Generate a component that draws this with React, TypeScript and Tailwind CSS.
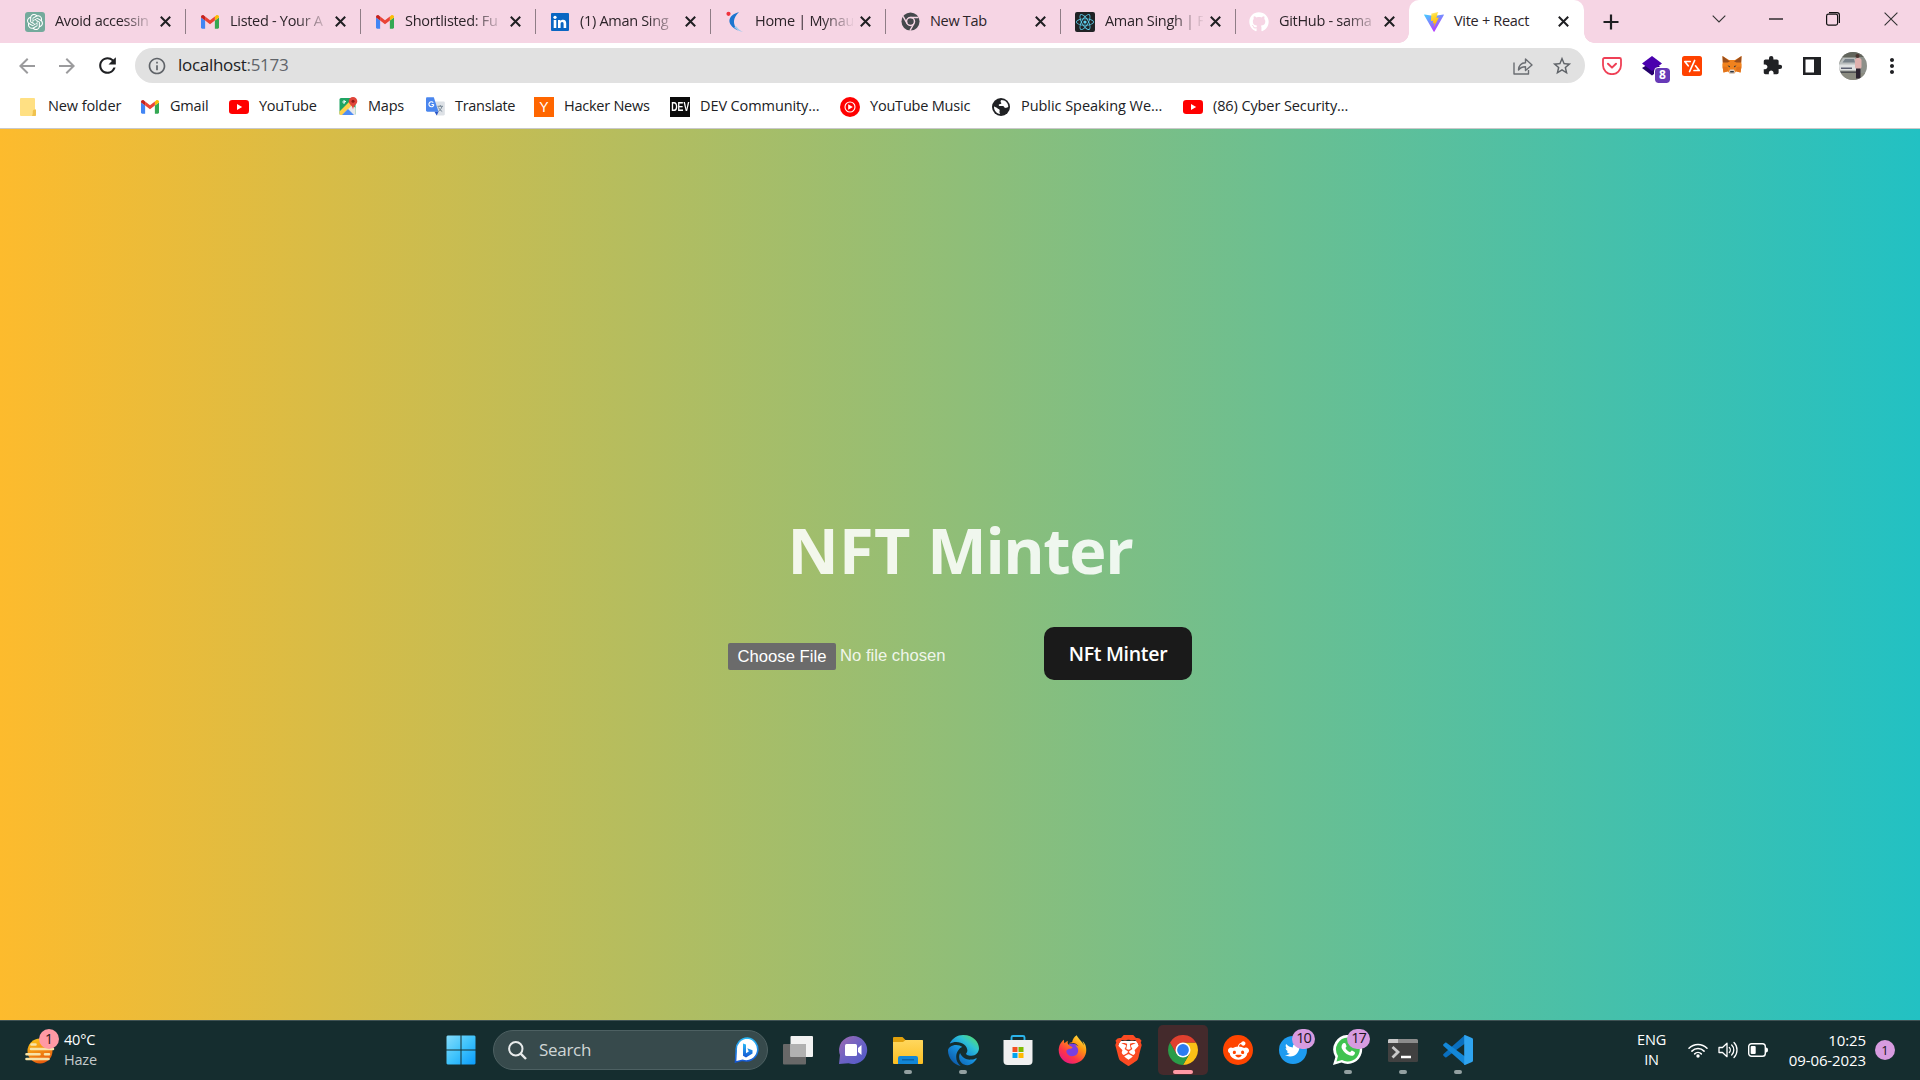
import React from "react";
import {
  MdArrowBack,
  MdArrowForward,
  MdRefresh,
  MdInfoOutline,
  MdStarBorder,
  MdExtension,
  MdMoreVert,
} from "react-icons/md";
import {
  FaGithub,
  FaReact,
  FaFirefoxBrowser,
  FaRedditAlien,
  FaTwitter,
  FaBrave,
  FaEdge,
} from "react-icons/fa6";
import { SiOpenai } from "react-icons/si";

const ui = "font-['Open_Sans','Noto_Sans',sans-serif]";

/* ---------- logos ---------- */

const Gmail = () => (
  <svg viewBox="0 0 24 18" className="h-[14px] w-[18px]">
    <path d="M0 16.4V3l5.500 4.100V18H1.600C.7 18 0 17.300 0 16.400z" fill="#4285f4" />
    <path d="M18.500 18V7.100L24 3v13.400c0 .9-.7 1.600-1.600 1.600z" fill="#34a853" />
    <path d="M18.500 1.600v5.500L24 3V2.200C24 .2 21.700-.9 20.100.3z" fill="#fbbc04" />
    <path d="M5.500 7.100V1.600L12 6.500l6.500-4.900v5.500L12 12z" fill="#ea4335" />
    <path d="M0 2.200V3l5.500 4.100V1.600L3.900.3C2.300-.9 0 .2 0 2.200z" fill="#c5221f" />
  </svg>
);

const OpenAi = () => (
  <div className="flex h-5 w-5 items-center justify-center rounded-[3px] bg-[#74aa9c] text-white">
    <SiOpenai size={16} />
  </div>
);

const LinkedIn = () => (
  <svg viewBox="0 0 18 18" className="h-[18px] w-[18px]">
    <rect width="18" height="18" rx="1" fill="#0a66c2" />
    <path d="M2.700 7h2.600v8H2.700z" fill="#fff" />
    <circle cx="4" cy="4.300" r="1.600" fill="#fff" />
    <path d="M7 7h2.500v1.200c.5-.9 1.400-1.400 2.600-1.400 2.300 0 3.100 1.500 3.100 3.700V15h-2.600v-4c0-1.200-.3-2-1.400-2-1.200 0-1.600.9-1.600 2v4H7z" fill="#fff" />
  </svg>
);

const Naukri = () => (
  <svg viewBox="0 0 20 22" className="h-[22px] w-5">
    <path d="M14 1C3 4 0 13 13 19.500 7 13 8 7 14 1z" fill="#1b75d0" />
    <path d="M9 16c2 2.500 5 4.500 9 5-2.500-1-5-3-6.500-5.500z" fill="#9cc8ee" />
    <circle cx="3.500" cy="2.800" r="2.100" fill="#f0323c" />
  </svg>
);

const ChromeGrey = () => (
  <svg viewBox="0 0 20 20" className="h-[19px] w-[19px]">
    <circle cx="10" cy="10" r="9.500" fill="#45484c" />
    <circle cx="10" cy="10" r="4.200" fill="none" stroke="#f5d5e3" strokeWidth="1.600" />
    <path d="M10 5.800h8.500M6.400 12.100 2.200 4.700M13.600 12.100 9.400 19.500" stroke="#f5d5e3" strokeWidth="1.500" />
  </svg>
);

const ReactTile = () => (
  <div className="flex h-5 w-5 items-center justify-center rounded-[2px] bg-[#202225] text-[#5ccfee]">
    <FaReact size={18} />
  </div>
);

const Vite = () => (
  <svg viewBox="0 0 20 20" className="h-5 w-5">
    <defs>
      <linearGradient id="va" x1="0" y1="0" x2=".6" y2="1">
        <stop offset="0" stopColor="#41d1ff" />
        <stop offset="1" stopColor="#bd34fe" />
      </linearGradient>
      <linearGradient id="vb" x1=".4" y1="0" x2=".6" y2="1">
        <stop offset="0" stopColor="#ffea83" />
        <stop offset=".2" stopColor="#ffdd35" />
        <stop offset="1" stopColor="#ffa800" />
      </linearGradient>
    </defs>
    <path d="M19.900 3.100 10.500 19.600c-.2.4-.7.4-.9 0L.1 3.100c-.2-.4.1-.8.5-.7L10 4l9.400-1.600c.4-.1.7.3.5.7z" fill="url(#va)" />
    <path d="m14.400.1-7 1.400-.5 7.200c0 .3.2.4.4.4l2-.4-.6 2.800 1.900-.4-.9 4.300 5.200-10-2.400.5 1.100-4.600z" fill="url(#vb)" />
  </svg>
);

const YouTube = () => (
  <svg viewBox="0 0 20 14" className="h-[14px] w-5">
    <rect width="20" height="14" rx="3.200" fill="#f00" />
    <path d="M8 4v6l5.200-3z" fill="#fff" />
  </svg>
);

const Folder = () => (
  <svg viewBox="0 0 16 18" className="h-[18px] w-4">
    <path d="M1 0h13a1 1 0 0 1 1 1v10.500h1V17a1 1 0 0 1-1 1H1a1 1 0 0 1-1-1V1a1 1 0 0 1 1-1z" fill="#ffe083" />
    <path d="M15 11.500c-1.800 0-2.500 1-2.200 3 .1 1.200-.3 2.300-.8 3.500h3a1 1 0 0 0 1-1v-4.500c0-.6-.4-1-1-1z" fill="#f0c24e" />
  </svg>
);

const Maps = () => (
  <svg viewBox="0 0 18 19" className="h-[19px] w-[19px]">
    <rect y="1" width="16" height="17" rx="1.500" fill="#1fa463" />
    <path d="M0 17 11 6l5 5v7H1z" fill="#e8e8e8" />
    <path d="M0 14.500 12 2.500l3 3L3 18H1.500A1.500 1.500 0 0 1 0 16.500z" fill="#ffd04b" />
    <path d="m8.500 12 6 6H2.500z" fill="#4f8df5" />
    <path d="M6.500 4.500H4.600v1.200h.8c-.3.9-2 .8-2-.7 0-1.300 1.400-1.700 2.200-.9" stroke="#fff" strokeWidth=".9" fill="none" />
    <path d="M13.500 0A4.300 4.300 0 0 0 9.200 4.300c0 3 3.800 4 4.300 8.200.5-4.200 4.300-5.200 4.300-8.200A4.300 4.300 0 0 0 13.500 0z" fill="#e0453a" />
    <circle cx="13.500" cy="4.300" r="1.500" fill="#8e1b16" />
  </svg>
);

const Translate = () => (
  <svg viewBox="0 0 19 19" className="h-[19px] w-[19px]">
    <path d="M7 4.500h10.500c.7 0 1.300.5 1.300 1.200v11.600c0 .7-.6 1.200-1.300 1.200h-7z" fill="#dde1e6" />
    <path d="M11.500 9.300h5.500M14.300 8v1.300M16 9.300c-.6 2.600-2.200 4-3.700 5.200M12.500 10.500c.8 1.800 2 3 3.700 4" stroke="#7b8a97" strokeWidth="1" fill="none" />
    <path d="M1.300.3h6.500l4.700 14.500H1.300C.6 14.800 0 14.300 0 13.600V1.500C0 .8.6.3 1.300.3z" fill="#4a86ee" />
    <path d="m8.500 14.800 2.200 3.700 1.800-3.700z" fill="#2a56c6" />
    <path d="M7.800 7.500H5.500M7.300 5.600a2.500 2.500 0 1 0 .6 2" stroke="#fff" strokeWidth="1.100" fill="none" />
  </svg>
);

const HackerNews = () => (
  <div className="flex h-5 w-5 items-center justify-center bg-[#ff6600] font-['Liberation_Sans',sans-serif] text-[14px] leading-none text-white">Y</div>
);

const Dev = () => (
  <div className="flex h-5 w-5 items-center justify-center bg-[#0a0a0a]">
    <span className="scale-x-[.8] scale-y-[1.2] font-['Liberation_Sans',sans-serif] text-[11px] leading-none font-bold text-white">DEV</span>
  </div>
);

const YtMusic = () => (
  <svg viewBox="0 0 20 20" className="h-5 w-5">
    <circle cx="10" cy="10" r="10" fill="#f00" />
    <circle cx="10" cy="10" r="5" fill="none" stroke="#fff" strokeWidth="1.100" />
    <path d="M8.200 7.200v5.600l4.600-2.800z" fill="#fff" />
  </svg>
);

const Globe = () => (
  <svg viewBox="0 0 18 18" className="h-[18px] w-[18px]">
    <circle cx="9" cy="9" r="9" fill="#202124" />
    <path d="M9.500 2c-1 .8-1.200 1.700-.5 2.500 1 .9-.2 1.600-1.500 1.800-1.200.2-.8 1.500 0 1.700h3.500c1 .2 1 1.500 2 1.800 1 .4 2.500-.3 3.300-1C16.200 4.800 13.300 2 9.500 2zM2 8.500c.5 0 5 2.500 5.500 3.200.6 1-.3 1.500 0 2.700.2.8.7 1.300.6 1.600C4.500 15.500 1.800 12.500 2 8.500z" fill="#fff" />
  </svg>
);

const Pocket = () => (
  <svg viewBox="0 0 20 18" className="h-[18px] w-5">
    <path d="M2.500 1h15A1.500 1.500 0 0 1 19 2.500v5.700a9 9 0 0 1-18 0V2.500A1.500 1.500 0 0 1 2.500 1z" fill="none" stroke="#ef4056" strokeWidth="1.800" />
    <path d="m6 6.800 4 3.800 4-3.800" fill="none" stroke="#ef4056" strokeWidth="2" strokeLinecap="round" strokeLinejoin="round" />
  </svg>
);

const Layers = () => (
  <div className="relative h-5 w-5">
    <svg viewBox="0 0 20 20" className="h-5 w-5">
      <path d="M0 12 10 6l10 6-10 7.500z" fill="#24006b" />
      <path d="M0 7.500 10 0l10 7.500L10 15z" fill="#4a00ae" />
    </svg>
    <div className="absolute top-[11px] left-[12px] flex h-[17px] w-[17px] items-center justify-center rounded-[4px] border border-white bg-[#673ab7] bg-clip-padding font-['Open_Sans',sans-serif] text-[12px] leading-none font-bold text-white">8</div>
  </div>
);

const Slash = () => (
  <svg viewBox="0 0 20 20" className="h-5 w-5">
    <rect width="20" height="20" rx="2.500" fill="#ff4200" />
    <path d="M8.200 5.500H2.800L6.200 9.800M12.600 4.500 7.600 15.500M12 14.500h5.200L13.500 9.800" fill="none" stroke="#fff" strokeWidth="1.700" strokeLinejoin="round" strokeLinecap="round" />
  </svg>
);

const Fox = () => (
  <svg viewBox="0 0 20 19" className="h-[19px] w-5">
    <path d="M.5 0 7 4h6l6.500-4-.3 6 .5 3-1.200 7.500-4.500-1-2.200 2.500H8.200L6 15.500l-4.500 1L.3 9l.5-3z" fill="#f0821e" />
    <path d="M.5 0 8 5.500 5.500 6.500.8 6.500zM19.500 0 12 5.500l2.500 1 4.700 0z" fill="#9a4e1c" />
    <path d="m.5 10.500 5 .5L6 15l-4.500 1.500zM19.500 10.500l-5 .5-.5 4 4.500 1.500z" fill="#e2731b" />
    <path d="M8 13.500h4l1 2-1 2.500H8l-1-2.500z" fill="#d9cdc4" />
    <path d="M8.200 15h3.600v1.500H8.200zM5.500 9.500l2.500.5-.5 1.500zM14.500 9.500 12 10l.5 1.500z" fill="#2c343c" />
  </svg>
);

const Avatar = () => (
  <svg viewBox="0 0 28 28" className="h-7 w-7">
    <clipPath id="av"><circle cx="14" cy="14" r="14" /></clipPath>
    <g clipPath="url(#av)">
      <rect width="28" height="28" fill="#8d908a" />
      <rect width="28" height="5" fill="#62655c" />
      <path d="M0 12 4 6h12l4 5v4H0z" fill="#b9bdbd" />
      <path d="M3.500 10.500 6 7h9l1 3.500z" fill="#78828a" />
      <rect y="12.500" width="19" height="6" fill="#dfe1e2" />
      <path d="M2 15.500h11v1.500H2z" fill="#5b5f70" />
      <rect y="19.500" width="18" height="1.500" fill="#4d4f52" />
      <rect y="21" width="28" height="8" fill="#8a8b80" />
      <rect x="16" y="6" width="6.500" height="11" rx="2.500" fill="#dfb0ae" />
      <rect x="17" y="16.500" width="4.500" height="10" fill="#2b2430" />
      <circle cx="18.500" cy="4" r="2" fill="#4a3530" />
    </g>
  </svg>
);

/* ---------- browser chrome ---------- */

const tabs = [
  { icon: <OpenAi />, title: "Avoid accessin" },
  { icon: <Gmail />, title: "Listed - Your A" },
  { icon: <Gmail />, title: "Shortlisted: Fu" },
  { icon: <LinkedIn />, title: "(1) Aman Sing" },
  { icon: <Naukri />, title: "Home | Mynau" },
  { icon: <ChromeGrey />, title: "New Tab" },
  { icon: <ReactTile />, title: "Aman Singh | F" },
  { icon: <FaGithub size={20} color="#fff" />, title: "GitHub - sama", last: true },
];

const CloseX = () => (
  <svg viewBox="0 0 11 11" className="h-[11px] w-[11px] shrink-0">
    <path d="m.8.800 9.400 9.400M10.200.8.8 10.200" stroke="#1f1f22" strokeWidth="2" />
  </svg>
);

type TabProps = { icon: React.ReactNode; title: string; active?: boolean; last?: boolean };

function Tab({ icon, title, active, last }: TabProps) {
  const box = active
    ? "relative flex h-[43px] w-[175px] items-center rounded-t-[10px] bg-white pl-[15px]"
    : last
      ? "flex h-[43px] w-[173px] items-center pl-[13px]"
      : "flex h-[43px] w-[175px] items-center pl-[14px]";
  return (
    <div className={box}>
      {active && (
        <>
          <div className="absolute bottom-0 -left-[10px] h-[10px] w-[10px] bg-[radial-gradient(circle_at_0_0,transparent_9.500px,#fff_10px)]" />
          <div className="absolute -right-[10px] bottom-0 h-[10px] w-[10px] bg-[radial-gradient(circle_at_100%_0,transparent_9.500px,#fff_10px)]" />
        </>
      )}
      <div className="flex h-[22px] w-5 shrink-0 items-center justify-center">{icon}</div>
      <div
        className={
          active || title === "New Tab"
            ? "ml-[10px] w-[98px] pb-[3px]"
            : "ml-[10px] w-[98px] pb-[3px] [mask-image:linear-gradient(90deg,#000_68%,transparent_102%)]"
        }
      >
        <span className="text-[14.500px] leading-5 tracking-[-0.300px] whitespace-nowrap text-[#2c2429]">{title}</span>
      </div>
      <div className={active ? "ml-[6px]" : "ml-[7px]"}><CloseX /></div>
      {!active && !last && <div className="ml-auto h-[25px] w-px bg-[#8f7d86]" />}
    </div>
  );
}

const bookmarks = [
  { icon: <Folder />, label: "New folder", w: "w-[122px]", t: "tracking-[-0.100px]" },
  { icon: <Gmail />, label: "Gmail", w: "w-[89px]", t: "tracking-[-0.200px]" },
  { icon: <YouTube />, label: "YouTube", w: "w-[109px]", t: "tracking-[-0.300px]" },
  { icon: <Maps />, label: "Maps", w: "w-[87px]", t: "tracking-[-0.200px]" },
  { icon: <Translate />, label: "Translate", w: "w-[109px]", t: "tracking-[-0.300px]" },
  { icon: <HackerNews />, label: "Hacker News", w: "w-[136px]", t: "tracking-[-0.250px]" },
  { icon: <Dev />, label: "DEV Community...", w: "w-[170px]", t: "tracking-[-0.100px]" },
  { icon: <YtMusic />, label: "YouTube Music", w: "w-[151px]", t: "tracking-[-0.200px]" },
  { icon: <Globe />, label: "Public Speaking We...", w: "w-[192px]", t: "tracking-[-0.050px]" },
  { icon: <YouTube />, label: "(86) Cyber Security...", w: "w-[180px]", t: "tracking-[-0.100px]" },
];

function Browser() {
  return (
    <header className="flex h-[129px] flex-col border-b border-[#c9c9c9] bg-white">
      <div className="flex h-[43px] shrink-0 bg-[#f6d5e4] pl-[11px]">
        {tabs.map((t) => (
          <Tab key={t.title} {...t} />
        ))}
        <Tab icon={<Vite />} title="Vite + React" active />
        <div className="flex flex-1 items-center pl-[19px]">
          <svg viewBox="0 0 16 16" className="h-4 w-4"><path d="M8 .5v15M.5 8h15" stroke="#1f1f22" strokeWidth="2.200" /></svg>
        </div>
        <div className="flex h-[37px] items-center pr-[22px]">
          <svg viewBox="0 0 14 8" className="mr-[43px] h-2 w-[14px]"><path d="m.7.700 6.300 6.300 6.300-6.300" fill="none" stroke="#333" strokeWidth="1.100" /></svg>
          <svg viewBox="0 0 14 2" className="mr-[43px] h-[2px] w-[14px]"><path d="M0 1h14" stroke="#111" strokeWidth="1.300" /></svg>
          <svg viewBox="0 0 14 14" className="mr-[44px] h-[14px] w-[14px]">
            <rect x=".6" y="2.100" width="11" height="11" rx="1.800" fill="none" stroke="#111" strokeWidth="1.200" />
            <path d="M3 .7h8A2.400 2.400 0 0 1 13.400 3v8" fill="none" stroke="#111" strokeWidth="1.200" />
          </svg>
          <svg viewBox="0 0 14 14" className="h-[14px] w-[14px]"><path d="m.6.600 12.800 12.800M13.400.6.6 13.400" stroke="#333" strokeWidth="1.100" /></svg>
        </div>
      </div>

      <div className="flex h-[45px] shrink-0 items-center pr-[16px] pl-[15px]">
        <MdArrowBack size={24} color="#9b9b9d" />
        <MdArrowForward size={24} color="#9b9b9d" className="ml-4" />
        <MdRefresh size={25} color="#1f2023" className="ml-4" />
        <div className="ml-[15px] flex h-[35px] w-[1450px] items-center rounded-full bg-[#e1e1e1] pl-[12px]">
          <MdInfoOutline size={20} color="#5f6368" />
          <span className="ml-[11px] pb-px text-[17px] tracking-[-0.300px] text-[#202124]">localhost<span className="text-[#606469]">:5173</span></span>
          <svg viewBox="0 0 20 18" className="ml-auto h-[18px] w-5">
            <path d="M1 5.500V17h14.500v-4M5.500 13c.3-4.500 2.700-7 7-7.200V2l6.500 6-6.500 5.500V9.800c-3 0-5.200.8-7 3.200z" fill="none" stroke="#6a6d72" strokeWidth="1.400" strokeLinejoin="round" />
          </svg>
          <MdStarBorder size={22} color="#5f6368" className="mr-[12px] ml-[18px]" />
        </div>
        <div className="ml-[17px] flex flex-1 items-center">
          <div className="flex w-10 items-center"><Pocket /></div>
          <div className="flex w-10 items-center"><Layers /></div>
          <div className="flex w-10 items-center"><Slash /></div>
          <div className="flex w-10 items-center"><Fox /></div>
          <div className="flex w-10 items-center"><MdExtension size={21} color="#202124" /></div>
          <div className="flex w-[37px] items-center">
            <svg viewBox="0 0 18 18" className="ml-px h-[18px] w-[18px]"><path d="M0 0h18v18H0zM2.500 2.500v13h8.500v-13z" fill="#202124" fillRule="evenodd" /></svg>
          </div>
          <Avatar />
          <MdMoreVert size={24} color="#202124" className="ml-[13px]" />
        </div>
      </div>

      <div className="flex h-[37px] items-center pl-[18px]">
        {bookmarks.map((b) => (
          <div key={b.label} className={`flex shrink-0 items-center gap-[10px] ${b.w}`}>
            <div className="flex w-5 shrink-0 justify-center">{b.icon}</div>
            <span className={`pb-[2px] text-[14.500px] leading-5 whitespace-nowrap text-[#202124] ${b.t}`}>{b.label}</span>
          </div>
        ))}
      </div>
    </header>
  );
}

/* ---------- taskbar ---------- */

const Start = () => (
  <svg viewBox="0 0 30 30" className="h-[30px] w-[30px]">
    <defs>
      <linearGradient id="st" x1="0" y1="0" x2="1" y2="1"><stop offset="0" stopColor="#85dcfb" /><stop offset=".5" stopColor="#3fc3fb" /><stop offset="1" stopColor="#0a9bfb" /></linearGradient>
    </defs>
    <path d="M1.500.5h13v14H.5v-13zM15.500.5h13l1 1v13h-14zM.5 15.500h14v14h-13l-1-1zM15.500 15.500h14v13l-1 1h-13z" fill="url(#st)" />
  </svg>
);

const Bing = () => (
  <svg viewBox="0 0 26 26" className="h-[26px] w-[26px]">
    <defs><linearGradient id="bi" x1="0" y1="0" x2="0" y2="1"><stop offset="0" stopColor="#2bb8f5" /><stop offset="1" stopColor="#1455d2" /></linearGradient></defs>
    <path d="M13.500 1A11.500 11.500 0 1 1 8.500 23.300L1.500 25l.7-11.500A11.500 11.500 0 0 1 13.500 1z" fill="#fff" stroke="url(#bi)" strokeWidth="1.600" />
    <path d="M9 6.500 12 7.500v8.800l2.800-1.700-1.500-3.300 5.200 2v3.200L12 20.500l-3-1.800z" fill="url(#bi)" />
  </svg>
);

const TaskView = () => (
  <svg viewBox="0 0 30 29" className="h-[29px] w-[30px]">
    <rect y="8" width="23" height="20.500" rx="1" fill="#686868" />
    <rect x="7.500" width="22.500" height="21" rx="1" fill="#f2f2f2" />
    <path d="M7.500 8H23v13H7.500z" fill="#b1b1b1" />
  </svg>
);

const Chat = () => (
  <svg viewBox="0 0 30 30" className="h-[30px] w-[30px]">
    <defs><linearGradient id="ch" x1="0" y1="0" x2="1" y2="1"><stop offset="0" stopColor="#a06ab0" /><stop offset=".5" stopColor="#6d62c4" /><stop offset="1" stopColor="#5059c9" /></linearGradient></defs>
    <path d="M15 1a14 14 0 1 1-4.500 27.200L1 29l1-9A14 14 0 0 1 15 1z" fill="url(#ch)" />
    <rect x="7" y="9" width="12" height="12" rx="1.500" fill="#fff" />
    <path d="m20 13 3.500-3v10L20 17z" fill="#fff" />
  </svg>
);

const Explorer = () => (
  <svg viewBox="0 0 30 27" className="h-[27px] w-[30px]">
    <defs><linearGradient id="ex" x1="0" y1="0" x2="0" y2="1"><stop offset="0" stopColor="#ffd75e" /><stop offset="1" stopColor="#fcbf22" /></linearGradient></defs>
    <path d="M0 1a1 1 0 0 1 1-1h8.500l3 3H29a1 1 0 0 1 1 1v6H0z" fill="#e0a00c" />
    <path d="M0 5h10l2.500-2H29a1 1 0 0 1 1 1v22a1 1 0 0 1-1 1H1a1 1 0 0 1-1-1z" fill="url(#ex)" />
    <path d="M5 27v-6a2 2 0 0 1 2-2h16a2 2 0 0 1 2 2v6z" fill="#1287d8" />
    <path d="M9 22.800h12" stroke="#0b5a9c" strokeWidth="1.200" />
  </svg>
);

const Edge = () => (
  <>
    <svg className="absolute h-0 w-0"><defs><linearGradient id="ed" x1=".1" y1="1" x2=".9" y2="0"><stop offset="0" stopColor="#0b4f9f" /><stop offset=".45" stopColor="#1790df" /><stop offset=".72" stopColor="#2fc3d3" /><stop offset="1" stopColor="#5be05f" /></linearGradient></defs></svg>
    <FaEdge size={31} fill="url(#ed)" />
  </>
);

const Store = () => (
  <svg viewBox="0 0 30 30" className="h-[30px] w-[30px]">
    <path d="M8.500 6V2.500A1.500 1.500 0 0 1 10 1h10a1.500 1.500 0 0 1 1.500 1.500V6" fill="none" stroke="#2bb5ec" strokeWidth="1.900" />
    <path d="M.5 5h29V26a4 4 0 0 1-4 4h-21a4 4 0 0 1-4-4z" fill="#f0f0f0" />
    <path d="M9.500 12h5v5h-5z" fill="#f25022" /><path d="M15.500 12h5v5h-5z" fill="#7fba00" />
    <path d="M9.500 18h5v5h-5z" fill="#00a4ef" /><path d="M15.500 18h5v5h-5z" fill="#ffb900" />
  </svg>
);

const Firefox = () => (
  <svg viewBox="0 0 30 30" className="h-[30px] w-[30px]">
    <defs>
      <linearGradient id="ff" x1=".9" y1="0" x2=".2" y2="1"><stop offset="0" stopColor="#fff14f" /><stop offset=".35" stopColor="#ff980e" /><stop offset=".7" stopColor="#ff3647" /><stop offset="1" stopColor="#e31587" /></linearGradient>
    </defs>
    <circle cx="14.500" cy="16" r="7.500" fill="#7a3fe0" />
    <FaFirefoxBrowser size={29} fill="url(#ff)" />
  </svg>
);

const Brave = () => (
  <svg viewBox="0 0 31 31" className="h-[31px] w-[31px]">
    <path d="M7 6h17l2 5-3 12-7.500 5L8 23 5 11z" fill="#fff" />
    <FaBrave size={31} fill="#fb4a22" />
  </svg>
);

const ChromeLogo = () => (
  <svg viewBox="0 0 30 30" className="h-[30px] w-[30px]">
    <path d="M27.990 7.500A15 15 0 0 1 15 30l6.500-11.200L15 7.500z" fill="#fbc116" />
    <path d="M2.010 7.500A15 15 0 0 0 15 30l6.500-11.200H15L8.500 18.700z" fill="#2a9c48" />
    <path d="M2.010 7.500 8.500 18.700 15 15V7.500h13A15 15 0 0 0 2.010 7.500z" fill="#e0402f" />
    <circle cx="15" cy="15" r="7.500" fill="#fff" />
    <circle cx="15" cy="15" r="5.900" fill="#2d7cf0" />
  </svg>
);

const Reddit = () => (
  <div className="flex h-[30px] w-[30px] items-center justify-center rounded-full bg-[#ff4500] text-white"><FaRedditAlien size={21} /></div>
);

const Badge = ({ n }: { n: string }) => (
  <div className="flex h-5 w-[23px] items-center justify-center rounded-full bg-[#d79be0] pb-px text-[14.500px] leading-none tracking-[-1px] text-[#1c1420]">{n}</div>
);

const Twitter = () => (
  <div className="relative flex h-7 w-7 items-center justify-center rounded-full bg-[#1d9bf0] text-white">
    <FaTwitter size={16} />
    <div className="absolute -top-[7px] left-[13px]"><Badge n="10" /></div>
  </div>
);

const WhatsApp = () => (
  <div className="relative h-[30px] w-[30px]">
    <svg viewBox="0 0 30 30" className="h-[30px] w-[30px]">
      <path d="M15.500 0A14.500 14.500 0 1 1 8.500 27.600L0 30l2.400-8A14.500 14.500 0 0 1 15.500 0z" fill="#fff" />
      <path d="M15.500 2.500A12 12 0 1 1 9 25l-5.500 1.600L5 21A12 12 0 0 1 15.500 2.500z" fill="#40c351" />
      <path d="M11 8c.6-.2 1.200 0 1.500.6l1 2.400c.2.5-.7 1.400-1 1.900.9 2 2.500 3.500 4.600 4.400.6-.3 1.400-1.900 1.900-1.700l2.600 1.300c.8.5.2 2.300-.6 3-1.500 1.200-3.500 1-5.300.2-3-1.300-5.300-3.500-6.700-6.300C8 11.500 9 8.600 11 8z" fill="#fff" />
    </svg>
    <div className="absolute -top-[6px] left-[14px]"><Badge n="17" /></div>
  </div>
);

const Terminal = () => (
  <svg viewBox="0 0 30 23" className="h-[23px] w-[30px]">
    <rect width="30" height="23" rx="1.500" fill="#414141" />
    <path d="M0 4V1.500A1.500 1.500 0 0 1 1.500 0h27A1.500 1.500 0 0 1 30 1.500V4z" fill="#8c8c8c" />
    <path d="M0 4V1.500A1.500 1.500 0 0 1 1.500 0H10v4z" fill="#c8c8c8" />
    <path d="m4.500 8 5.500 5-5.500 5.500" fill="none" stroke="#c9c9c9" strokeWidth="2.800" />
    <path d="M13 18h10" stroke="#fff" strokeWidth="2.500" />
  </svg>
);

const Code = () => (
  <svg viewBox="0 0 30 30" className="h-[30px] w-[30px]">
    <path d="M22 0v8.500L3.500 22.300c-.4.3-.9.3-1.300 0L.5 20.700c-.5-.4-.5-1.100 0-1.600z" fill="#0a6fbe" />
    <path d="M22 30v-8.500L3.500 7.700c-.4-.3-.9-.3-1.300 0L.5 9.300c-.5.4-.5 1.100 0 1.600z" fill="#1387d8" />
    <path d="M22 0 29 3a1.600 1.600 0 0 1 1 1.500v21a1.600 1.600 0 0 1-1 1.500l-7 3c-.6.2-.8-.2-.8-.8V.8c0-.6.2-1 .8-.8z" fill="#2fa4f0" />
  </svg>
);

type TaskbarApp = { el: React.ReactNode; dot?: boolean; on?: boolean };
const apps: TaskbarApp[] = [
  { el: <TaskView /> },
  { el: <Chat /> },
  { el: <Explorer />, dot: true },
  { el: <Edge />, dot: true },
  { el: <Store /> },
  { el: <Firefox /> },
  { el: <Brave /> },
  { el: <ChromeLogo />, dot: true, on: true },
  { el: <Reddit /> },
  { el: <Twitter /> },
  { el: <WhatsApp />, dot: true },
  { el: <Terminal />, dot: true },
  { el: <Code />, dot: true },
];

function Taskbar() {
  return (
    <footer className="flex h-[60px] shrink-0 items-center border-t border-[#3f5254] bg-[#152d2f] pb-px text-white">
      <div className="flex w-[436px] items-center pl-[25px]">
        <div className="relative h-7 w-[30px]">
          <svg viewBox="0 0 30 28" className="h-7 w-[30px]">
            <defs><linearGradient id="su" x1=".2" y1="0" x2=".6" y2="1"><stop offset="0" stopColor="#fcc419" /><stop offset="1" stopColor="#e8590c" /></linearGradient></defs>
            <circle cx="15" cy="15" r="12.500" fill="url(#su)" />
            <path d="M6.500 8.500h4M6 13h22M1.500 18.300h13M20 18.300h4M1.500 23h22" stroke="#f7e3a8" strokeWidth="2.600" strokeLinecap="round" />
          </svg>
          <div className="absolute -top-[7px] left-[14px] flex h-5 w-5 items-center justify-center rounded-full bg-[#ff99a4] text-[14px] leading-none text-[#2b1518]">1</div>
        </div>
        <div className="ml-[9px] flex flex-col pb-px text-[14.500px] leading-5 tracking-[-0.200px]">
          <span>40°C</span>
          <span className="text-[#c3cacb]">Haze</span>
        </div>
      </div>
      <div className="flex h-[50px] w-[50px] items-center justify-center"><Start /></div>
      <div className="ml-[7px] flex h-10 w-[275px] items-center rounded-full border border-[#4d6062] bg-[#374a4c] pr-[7px] pl-[14px]">
        <svg viewBox="0 0 19 19" className="h-[19px] w-[19px]"><circle cx="7.800" cy="7.800" r="6.700" fill="none" stroke="#e8ebeb" strokeWidth="2" /><path d="m12.700 12.700 5.300 5.300" stroke="#e8ebeb" strokeWidth="2.400" /></svg>
        <span className="ml-[12px] text-[17px] tracking-[-0.300px] text-[#d0d6d6]">Search</span>
        <div className="ml-auto"><Bing /></div>
      </div>
      <div className="ml-[5px] flex gap-[5px]">
        {apps.map((a, i) => (
          <div key={i} className={a.on ? "relative flex h-[50px] w-[50px] items-center justify-center rounded-[5px] bg-[#442a2c]" : "relative flex h-[50px] w-[50px] items-center justify-center"}>
            {a.el}
            {a.dot && <div className={a.on ? "absolute bottom-px left-[15px] h-1 w-5 rounded-full bg-[#ff99a4]" : "absolute bottom-px left-[21px] h-1 w-2 rounded-full bg-[#93a0a1]"} />}
          </div>
        ))}
      </div>
      <div className="ml-auto flex items-center pr-[25px] text-[14.500px] leading-5">
        <div className="mr-[22px] flex flex-col items-center tracking-[-0.200px]"><span>ENG</span><span>IN</span></div>
        <svg viewBox="0 0 20 16" className="h-4 w-5">
          <path d="M1 6.200a12.700 12.700 0 0 1 18 0M3.900 9.100a8.600 8.600 0 0 1 12.200 0M6.700 11.900a4.700 4.700 0 0 1 6.600 0" fill="none" stroke="#fff" strokeWidth="1.500" strokeLinecap="round" />
          <circle cx="10" cy="14" r="1.700" fill="#fff" />
        </svg>
        <svg viewBox="0 0 20 18" className="ml-[10px] h-[18px] w-5">
          <path d="M1 6.500h3.500L9 2.300v13.400l-4.500-4.200H1z" fill="none" stroke="#fff" strokeWidth="1.300" strokeLinejoin="round" />
          <path d="M11.300 6.500c1.300 1.300 1.300 3.700 0 5M13.700 4c2.800 2.700 2.800 7.300 0 10M16 1.500c4 4 4 11 0 15" fill="none" stroke="#fff" strokeWidth="1.300" strokeLinecap="round" />
        </svg>
        <svg viewBox="0 0 20 14" className="ml-[10px] h-[14px] w-5">
          <rect x=".7" y=".7" width="16.600" height="12.600" rx="2.800" fill="none" stroke="#fff" strokeWidth="1.400" />
          <rect x="2.700" y="3" width="5" height="8" rx="1" fill="#fff" />
          <path d="M18 4.500c1.500 0 2 1 2 2.500s-.5 2.500-2 2.500z" fill="#fff" />
        </svg>
        <div className="ml-[19px] flex w-[79px] flex-col items-end pb-px text-[15px] tracking-[-0.100px] whitespace-nowrap"><span>10:25</span><span>09-06-2023</span></div>
        <div className="ml-[9px] flex h-5 w-5 items-center justify-center rounded-full bg-[#d79be0] text-[13px] leading-none text-[#1c1420]">1</div>
      </div>
    </footer>
  );
}

export default function App() {
  return (
    <div className={`flex h-[1080px] w-[1920px] flex-col overflow-hidden ${ui}`}>
      <Browser />
      <main className="flex flex-1 flex-col items-center bg-linear-to-r/srgb from-[#fdbb2d] to-[#22c1c3] pt-[381px]">
        <h1 className="h-[80px] text-[63px] leading-[80px] font-bold tracking-[-1.350px] whitespace-nowrap text-white/87">
          <span className="tracking-[0.300px]">NFT </span>Minter
        </h1>
        <div className="mt-[37px] flex h-[53px] w-[464px] items-center justify-between">
          <div className="flex items-center pt-[6px] font-['Liberation_Sans',sans-serif] text-[16.670px] text-white/87">
            <button className="mr-[5px] h-[27px] w-[108px] rounded-[2px] bg-[#6b6b6b] text-white">Choose File</button>
            <span className="-mt-[2px] -ml-px">No file chosen</span>
          </div>
          <button className="h-[53px] w-[148px] rounded-[10px] bg-[#1a1a1a] pt-px text-[19.500px] font-semibold tracking-[-0.300px] text-white">NFt Minter</button>
        </div>
      </main>
      <Taskbar />
    </div>
  );
}
